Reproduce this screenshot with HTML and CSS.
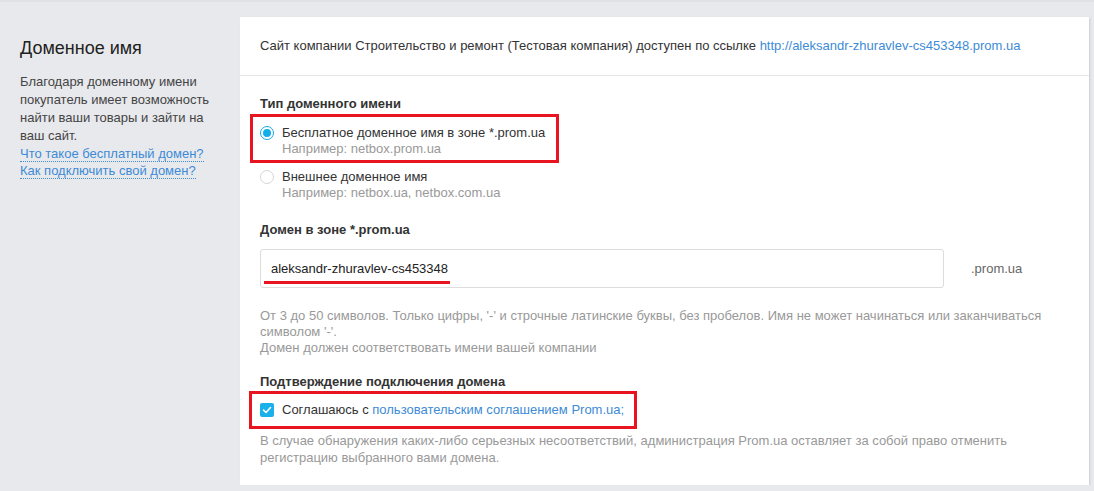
FILE: index.html
```html
<!DOCTYPE html>
<html lang="ru">
<head>
<meta charset="utf-8">
<title>Доменное имя</title>
<link rel="stylesheet" href="styles.css">
</head>
<body>
<div class="page">
  <aside class="side">
    <h1 class="side-title">Доменное имя</h1>
    <p class="side-text">Благодаря доменному имени покупатель имеет возможность найти ваши товары и зайти на ваш сайт.</p>
    <a class="side-link" href="#">Что такое бесплатный домен?</a><br>
    <a class="side-link" href="#">Как подключить свой домен?</a>
  </aside>
  <main class="card">
    <div class="card-head">Сайт компании Строительство и ремонт (Тестовая компания) доступен по ссылке <a class="link" href="#">http://aleksandr-zhuravlev-cs453348.prom.ua</a></div>
    <div class="card-body">
      <div class="label first">Тип доменного имени</div>
      <div class="option marked">
        <span class="radio checked"></span>
        <div class="option-text">
          <div class="option-title">Бесплатное доменное имя в зоне *.prom.ua</div>
          <div class="option-sub">Например: netbox.prom.ua</div>
        </div>
      </div>
      <div class="option second">
        <span class="radio"></span>
        <div class="option-text">
          <div class="option-title">Внешнее доменное имя</div>
          <div class="option-sub">Например: netbox.ua, netbox.com.ua</div>
        </div>
      </div>
      <div class="label domain-label">Домен в зоне *.prom.ua</div>
      <div class="domain-row">
        <div class="input">aleksandr-zhuravlev-cs453348<span class="underline"></span></div>
        <span class="suffix">.prom.ua</span>
      </div>
      <p class="help">От 3 до 50 символов. Только цифры, '-' и строчные латинские буквы, без пробелов. Имя не может начинаться или заканчиваться символом '-'.<br>Домен должен соответствовать имени вашей компании</p>
      <div class="label confirm-label">Подтверждение подключения домена</div>
      <div class="agree">
        <span class="checkbox"><svg width="10" height="8" viewBox="0 0 10 8"><path d="M1.5 4.2 L4 6.5 L8.5 1.5" fill="none" stroke="#fff" stroke-width="1.6" stroke-linecap="round" stroke-linejoin="round"/></svg></span>
        <span class="agree-text">Соглашаюсь с <a class="link" href="#">пользовательским соглашением Prom.ua;</a></span>
      </div>
      <p class="note">В случае обнаружения каких-либо серьезных несоответствий, администрация Prom.ua оставляет за собой право отменить регистрацию выбранного вами домена.</p>
    </div>
  </main>
</div>
</body>
</html>
```

FILE: styles.css
```css
html, body {
  margin: 0;
  padding: 0;
}
body {
  background: #e8e9ed;
  font-family: "Liberation Sans", Arial, sans-serif;
  font-size: 13px;
  color: #333;
  border-top: 2px solid #e1e2e6;
}
.page {
  display: flex;
  align-items: flex-start;
}
.side {
  width: 200px;
  padding: 36px 20px 0 20px;
  flex: none;
}
.side-title {
  margin: 0;
  font-size: 18px;
  line-height: 21px;
  font-weight: normal;
  color: #222;
}
.side-text {
  margin: 14px 0 0 0;
  width: 195px;
  line-height: 18px;
  color: #444;
}
.side-link {
  color: #3d8bd6;
  text-decoration: none;
  border-bottom: 1px dotted #3d8bd6;
  line-height: 17px;
}
.link {
  color: #3d8bd6;
  text-decoration: none;
}
.card {
  margin-top: 15px;
  width: 849px;
  background: #fff;
  box-shadow: 1px 1px 2px rgba(0, 0, 0, 0.12);
}
.card-head {
  padding: 20px 20px 21px 20px;
  line-height: 17px;
  border-bottom: 1px solid #e6e6e6;
}
.card-body {
  padding: 20px 20px 19px 20px;
}
.label {
  font-weight: bold;
  line-height: 16px;
  color: #333;
}
.option {
  display: flex;
  align-items: flex-start;
}
.option.marked {
  margin: 2px 0 0 -10px;
  width: 296px;
  border: 3px solid #e8141f;
  padding: 7px 0 3px 7px;
}
.option.second {
  margin-top: 5px;
}
.radio {
  flex: none;
  width: 12px;
  height: 12px;
  border: 1px solid #d6d6d6;
  border-radius: 50%;
  margin: 2px 8px 0 0;
  box-sizing: content-box;
  position: relative;
  background: #fff;
}
.radio.checked {
  border-color: #1aa7e2;
}
.radio.checked::after {
  content: "";
  position: absolute;
  left: 2px;
  top: 2px;
  width: 8px;
  height: 8px;
  border-radius: 50%;
  background: #11aee9;
}
.option-title {
  line-height: 17px;
  color: #333;
}
.option-sub {
  line-height: 16px;
  color: #999;
}
.domain-label {
  margin-top: 21px;
}
.domain-row {
  display: flex;
  align-items: center;
  margin-top: 11px;
}
.input {
  position: relative;
  width: 672px;
  height: 37px;
  border: 1px solid #dcdcdc;
  border-radius: 3px;
  padding-left: 10px;
  line-height: 37px;
  color: #222;
}
.underline {
  position: absolute;
  left: 3px;
  top: 31px;
  width: 186px;
  height: 3px;
  background: #e8141f;
}
.suffix {
  margin-left: 27px;
  color: #666;
}
.help {
  margin: 20px 0 0 0;
  line-height: 16px;
  color: #999;
}
.confirm-label {
  margin-top: 18px;
}
.agree {
  display: inline-flex;
  align-items: center;
  margin: 1px 0 0 -11px;
  border: 3px solid #e8141f;
  padding: 9px 10px 9px 8px;
}
.checkbox {
  width: 14px;
  height: 14px;
  border-radius: 2px;
  background: #1ab0ea;
  display: flex;
  align-items: center;
  justify-content: center;
  margin-right: 8px;
}
.agree-text {
  line-height: 14px;
  color: #333;
}
.note {
  margin: 3px 0 0 0;
  line-height: 17px;
  color: #999;
}
```
